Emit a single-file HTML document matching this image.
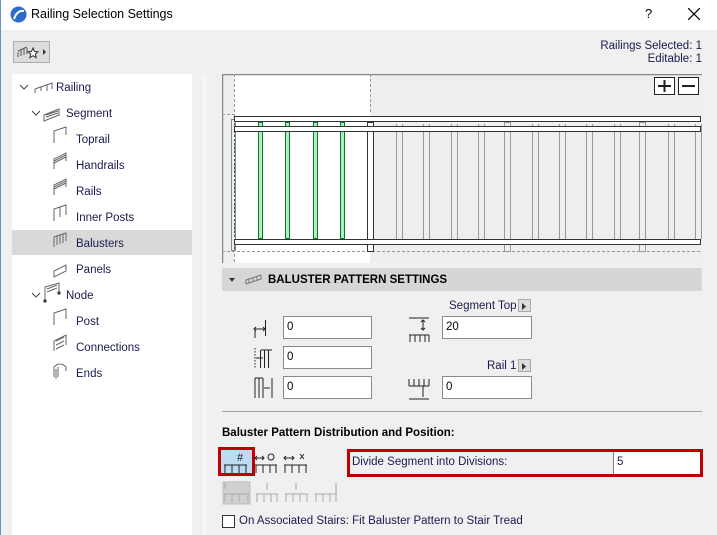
<!DOCTYPE html>
<html><head><meta charset="utf-8"><style>
*{margin:0;padding:0;box-sizing:border-box}
body{width:717px;height:535px;background:#f0f0f0;font-family:"Liberation Sans",sans-serif;font-size:11.5px;color:#1a1a50;position:relative;overflow:hidden}
.a{position:absolute;white-space:nowrap}
.inp{position:absolute;background:#fff;border:1px solid #8a8a8a;height:23px;padding:4px 0 0 3px;font-size:11.5px;color:#000}
.tree .a{line-height:14px}
</style></head><body>
<div class="a" style="left:0;top:0;width:717px;height:30px;background:#fff"></div>
<div class="a" style="left:0;top:0;width:1px;height:535px;background:#6b8fc9"></div>
<svg class="a" style="left:10px;top:6px" width="17" height="17"><circle cx="8.5" cy="8.5" r="8" fill="#2b6bc9"/><path d="M4 13 Q7 4 14 5" stroke="#fff" stroke-width="2" fill="none"/></svg>
<div class="a" style="left:31px;top:7px;font-size:12.5px;color:#000">Railing Selection Settings</div>
<div class="a" style="left:645px;top:6px;font-size:13px;color:#000">?</div>
<svg class="a" style="left:688px;top:8px" width="12" height="12"><path d="M0 0L12 12M12 0L0 12" stroke="#000" stroke-width="1.2"/></svg>

<div class="a" style="left:13px;top:41px;width:37px;height:22px;background:#dcdcdc;border:1px solid #adadad"></div>
<svg class="a" style="left:16px;top:43px" width="32" height="18"><path d="M2 8L11 4M2 9V14M5 7V13M8 6V12M11 5V11" stroke="#555" fill="none"/><path d="M17 5l1.5 3.5 3.5.3-2.7 2.3.9 3.6-3.2-2-3.2 2 .9-3.6-2.7-2.3 3.5-.3z" fill="#fff" stroke="#333"/><path d="M27 6l3 3-3 3z" fill="#333"/></svg>
<div class="a" style="right:15px;top:40px;text-align:right;line-height:13px">Railings Selected: 1<br>Editable: 1</div>

<div class="a" style="left:12px;top:74px;width:180px;height:461px;background:#fff"></div>
<div class="a" style="left:12px;top:230px;width:180px;height:25px;background:#d9d9d9"></div>
<div class="a" style="left:202px;top:74px;width:5px;height:461px;background:#f6f6f6"></div>
<div class="tree">
<svg class="a" style="left:18px;top:79px" width="180" height="300" fill="none" stroke="#444">
<path d="M2 6l4 4 4-4M14 32l4 4 4-4M14 214l4 4 4-4"/>
<g stroke="#666"><path d="M17 10L34 4V10M17 10V14M23 8V12M29 6V12"/>
<path d="M26 36L41 30V36L26 42z M28 36L40 32M28 38L40 34"/>
<path d="M36 64V52L48 48V56"/>
<path d="M36 90V80L48 74V82M36 82L48 76M36 84L48 78"/>
<path d="M36 116V106L48 100V108M36 108L48 102M36 110L48 104"/>
<path d="M36 142V130L48 126V136M42 128V138"/>
<path d="M36 168V158L48 154V162M39 157V166M42 156V165M45 155V164"/>
<path d="M36 192L48 186V192L36 198z"/>
<path d="M27 222V208L41 204V214M29 210L39 206M29 213L39 209"/></g>
<circle cx="27" cy="222" r="1.2" fill="#333"/><circle cx="41" cy="214" r="1.2" fill="#333"/>
<path d="M36 246V234L48 230V240M36 272V262L48 256V266M38 262L46 258M38 266L46 262M38 270L46 266M36 298V288Q42 282 48 288V292M38 290V300M40 288V298" stroke="#666"/>
</svg>
<div class="a" style="left:56px;top:81px">Railing</div>
<div class="a" style="left:66px;top:107px">Segment</div>
<div class="a" style="left:76px;top:133px">Toprail</div>
<div class="a" style="left:76px;top:159px">Handrails</div>
<div class="a" style="left:76px;top:185px">Rails</div>
<div class="a" style="left:76px;top:211px">Inner Posts</div>
<div class="a" style="left:76px;top:237px">Balusters</div>
<div class="a" style="left:76px;top:263px">Panels</div>
<div class="a" style="left:66px;top:289px">Node</div>
<div class="a" style="left:76px;top:315px">Post</div>
<div class="a" style="left:76px;top:341px">Connections</div>
<div class="a" style="left:76px;top:367px">Ends</div>
</div>

<svg class="a" style="left:222px;top:74px" width="480" height="189">
<rect x="0" y="0" width="480" height="189" fill="#eeeeee"/>
<rect x="12" y="0" width="136" height="189" fill="#fff"/>
<path d="M0.5 0V189M0 0.5H480" stroke="#888" stroke-width="1.5"/>
<path d="M12.5 0V189M148.5 0V40M0 40.5H12M0 177.5H480" stroke="#999" stroke-dasharray="3,2"/>
<path d="M12.5 45V175" stroke="#0a7a2a" stroke-dasharray="2,2"/>
<rect x="9.5" y="45.5" width="4" height="131" fill="none" stroke="#888"/>
<g fill="none" stroke="#999">
<path d="M174.5 50V165M180.5 50V165M201.5 50V165M207.5 50V165M229.5 50V165M235.5 50V165M256.5 50V165M262.5 50V165M310.5 50V165M316.5 50V165M337.5 50V165M343.5 50V165M364.5 50V165M370.5 50V165M392.5 50V165M398.5 50V165M446.5 50V165M452.5 50V165M473.5 50V165M479.5 50V165"/>
<rect x="282.5" y="48.5" width="6" height="129"/><rect x="417.5" y="48.5" width="6" height="129"/>
</g>
<g fill="#a8f0bf" stroke="#0a7a2a"><rect x="36.5" y="48.5" width="4" height="116"/><rect x="63.5" y="48.5" width="4" height="116"/><rect x="91.5" y="48.5" width="4" height="116"/><rect x="118.5" y="48.5" width="4" height="116"/></g>
<rect x="145.5" y="48.5" width="6" height="129" fill="#fff" stroke="#333"/>
<g fill="#fff" stroke="#333"><rect x="12.5" y="42.5" width="466" height="5"/><rect x="12.5" y="52.5" width="466" height="5"/><rect x="12.5" y="165.5" width="466" height="5"/></g>
<rect x="145.5" y="48.5" width="6" height="4" fill="#fff" stroke="#333"/>
<g fill="#fff" stroke="#222"><rect x="432.5" y="3.5" width="20" height="17"/><rect x="456.5" y="3.5" width="20" height="17"/></g>
<path d="M436 12H449M442.5 6V18M460 12H473" stroke="#222" stroke-width="2"/>
</svg>

<div class="a" style="left:222px;top:268px;width:480px;height:23px;background:#d6d6d6;border-radius:2px"></div>
<svg class="a" style="left:226px;top:273px" width="40" height="14"><path d="M3 5h6l-3 4z" fill="#333"/><path d="M20 11L35 6V2M20 11V7L35 2M23 6V10M27 5V9M31 4V8" stroke="#777" fill="none"/></svg>
<div class="a" style="left:268px;top:274px;font-weight:bold;color:#000">BALUSTER PATTERN SETTINGS</div>

<div class="a" style="left:449px;top:300px">Segment Top</div>
<div class="a" style="left:518px;top:299px;width:13px;height:13px;background:#ddd;border:1px solid #aaa"></div>
<div class="a" style="left:487px;top:360px">Rail 1</div>
<div class="a" style="left:518px;top:359px;width:13px;height:13px;background:#ddd;border:1px solid #aaa"></div>
<svg class="a" style="left:516px;top:297px" width="20" height="80"><path d="M6 6l4 3.5-4 3.5zM6 66l4 3.5-4 3.5z" fill="#333"/></svg>

<div class="inp" style="left:283px;top:316px;width:89px">0</div>
<div class="inp" style="left:283px;top:346px;width:89px">0</div>
<div class="inp" style="left:283px;top:376px;width:89px">0</div>
<div class="inp" style="left:442px;top:316px;width:90px">20</div>
<div class="inp" style="left:442px;top:376px;width:90px">0</div>
<svg class="a" style="left:250px;top:316px" width="30" height="90" fill="none" stroke="#222">
<path d="M15.5 4V20M5 13H14M6 11l-2 2 2 2M13 11l2 2-2 2M5 15V22" />
<path d="M5 32V53" stroke-dasharray="1.5,1.5"/><path d="M6 42H13M10.5 34V52M14.5 34V52M18.5 34V52M11 34H22"/>
<path d="M5 62V82M5 62H13M9 62V82M13 62V82M14 72H20M22 62V82" />
</svg>
<svg class="a" style="left:407px;top:316px" width="30" height="90" fill="none" stroke="#222">
<path d="M2 2H22M2 19H22M3 19V26M8 19V26M13 19V26M18 19V26M22 19V26M16 4V14M14 6l2-2 2 2M14 12l2 2 2-2"/>
<path d="M2 63V70M7 63V70M12 63V70M17 63V70M22 63V70M2 70H22M2 83H22M16 70V81" />
</svg>

<div class="a" style="left:222px;top:411px;width:480px;height:1px;background:#a0a0a0"></div>
<div class="a" style="left:222px;top:427px;font-weight:bold;color:#000">Baluster Pattern Distribution and Position:</div>

<div class="a" style="left:218px;top:447px;width:37px;height:29px;border:3px solid #c00000;background:#bcdcf4"></div>
<svg class="a" style="left:220px;top:449px" width="120" height="60" fill="none" stroke="#222">
<path d="M4 16H27M5 16V24M12 16V24M19 16V24M26 16V24"/><text x="17" y="12" font-size="11" fill="#222" stroke="none" font-family="Liberation Sans">#</text>
<path d="M35 16H57M36 16V24M43 16V24M50 16V24M56 16V24M35 9H44M37 7l-2 2 2 2M42 7l2 2-2 2"/><circle cx="51" cy="8" r="3"/>
<path d="M64 16H87M65 16V24M72 16V24M79 16V24M86 16V24M65 9H73M66 7l-2 2 2 2M72 7l2 2-2 2M80 5l4 5M84 5l-4 5"/>
<rect x="3" y="33" width="27" height="22" fill="#d0d0d0" stroke="#bbb"/>
<g stroke="#aaa"><path d="M4 45H29M5 45V53M12 45V53M19 45V53M28 45V53M5 34V40M36 45H58M37 45V53M44 45V53M51 45V53M57 45V53M65 45H88M66 45V53M73 45V53M80 45V53M87 45V53M95 45H117M96 45V53M103 45V53M110 45V53M116 45V53M116 34V45M47 34V41M76 34V41"/></g>
</svg>
<div class="a" style="left:347px;top:449px;width:356px;height:28px;border:3px solid #c00000;background:#f0f0f0"></div>
<div class="a" style="left:613px;top:452px;width:87px;height:22px;background:#fff;border-left:1px solid #808080"></div>
<div class="a" style="left:352px;top:456px">Divide Segment into Divisions:</div>
<div class="a" style="left:617px;top:456px">5</div>

<div class="a" style="left:222px;top:515px;width:13px;height:13px;background:#fff;border:1px solid #333"></div>
<div class="a" style="left:239px;top:515px">On Associated Stairs: Fit Baluster Pattern to Stair Tread</div>
</body></html>
